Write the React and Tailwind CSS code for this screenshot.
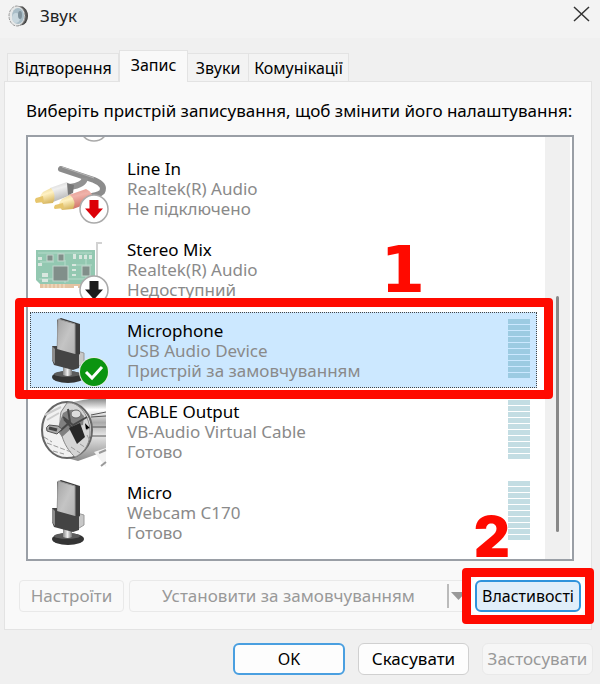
import React from 'react';

function SpeakerIcon() {
  return (
    <svg width="22" height="24" viewBox="0 0 22 24" aria-hidden="true">
      <ellipse cx="14" cy="12" rx="6" ry="9" fill="#444" />
      <path d="M9 2 15 2.500 19 8 19 15 15 21 8 22Z" fill="#555" />
      <ellipse cx="9" cy="12" rx="8" ry="10" fill="#e6e8e8" stroke="#999" strokeWidth="1" strokeDasharray="3 1" />
      <ellipse cx="10" cy="12" rx="6" ry="8" fill="#a9bdc7" />
      <ellipse cx="8" cy="14" rx="4" ry="5" fill="#c8d7de" />
      <ellipse cx="12" cy="11" rx="2" ry="4" fill="#7f919b" />
    </svg>
  );
}

function DownBadge({ color }) {
  return (
    <g>
      <circle cx="62" cy="60" r="14" fill="#fff" stroke="#aaa" strokeWidth="1.500" />
      <path d="M57.500 51h9v8.500h4.500l-9 10-9-10h4.500z" fill={color} />
    </g>
  );
}

function LineInIcon() {
  return (
    <svg width="80" height="80" viewBox="0 0 80 80" className="block" aria-hidden="true">
      <defs>
        <linearGradient id="gold" x1="0" y1="0" x2="0.300" y2="1">
          <stop offset="0" stopColor="#e8d08d" />
          <stop offset="0.450" stopColor="#fff2c4" />
          <stop offset="1" stopColor="#d9b965" />
        </linearGradient>
        <linearGradient id="silver" x1="0" y1="0" x2="0.300" y2="1">
          <stop offset="0" stopColor="#c8c8c8" />
          <stop offset="0.400" stopColor="#f0f0f0" />
          <stop offset="1" stopColor="#b5b5b5" />
        </linearGradient>
        <linearGradient id="redPlug" x1="0" y1="0" x2="0.300" y2="1">
          <stop offset="0" stopColor="#e0968c" />
          <stop offset="0.400" stopColor="#f0b3aa" />
          <stop offset="1" stopColor="#cf7166" />
        </linearGradient>
      </defs>
      <path d="M29 20 62 31Q74 36 70 43 66 47 55 47" fill="none" stroke="#8c8c8c" strokeWidth="6" strokeLinecap="round" />
      <path d="M53 29Q52 36 38 38" fill="none" stroke="#929292" strokeWidth="6" />
      <path d="M30 18 62 29" stroke="#b5b5b5" strokeWidth="1" />
      <path d="M18 39 35 33Q40 37 39 46L21 53Z" fill="url(#silver)" />
      <path d="m35 34 7 2-1 8-5 2Z" fill="#777" />
      <path d="M11 43 19 39Q25 46 21 54L11 55Q5 49 11 43Z" fill="url(#gold)" />
      <path d="M11 47 4 49q-2 2 0 5l8-1Z" fill="#e7c66d" />
      <path d="M37 46 54 40Q63 44 60 53L41 60Z" fill="url(#redPlug)" />
      <path d="M30 50 38 46Q45 52 41 60L30 61Q24 56 30 50Z" fill="url(#gold)" />
      <path d="M31 54 23 56q-2 3 0 4l9-1Z" fill="#e7c66d" />
      <DownBadge color="#dc0008" />
    </svg>
  );
}

function SoundCardIcon() {
  return (
    <svg width="80" height="80" viewBox="0 0 80 80" className="block" aria-hidden="true">
      <path d="M70 13H65V50" fill="none" stroke="#d2d2d2" strokeWidth="2" />
      <path d="M4 20H63V54H8L4 50Z" fill="#93c8b1" />
      <path d="M8 54h46v4H46v-2h-4v2H8Z" fill="#e3c3a2" />
      <path d="M12 54v4m4-4v4m4-4v4m4-4v4m4-4v4m4-4v4" stroke="#f5e3ca" />
      <path d="M6 23h54M8 32h14m18 3h20M7 49h50M28 28v-5M33 30v23M54 24v24" stroke="#b6dccb" strokeWidth="1" />
      <g fill="#818f8a" stroke="#c3d6cd" strokeWidth="1">
        <rect x="21" y="36" width="15" height="15" />
        <rect x="50" y="36" width="8" height="10" />
        <rect x="15" y="25" width="6" height="6" />
        <rect x="26" y="24" width="6" height="7" />
      </g>
      <g fill="#d9e7df">
        <rect x="6" y="27" width="4" height="3" />
        <rect x="6" y="33" width="4" height="3" />
        <rect x="10" y="43" width="6" height="4" />
        <rect x="10" y="49" width="6" height="3" />
        <rect x="41" y="24" width="3" height="5" />
        <rect x="47" y="25" width="3" height="4" />
        <rect x="52" y="25" width="3" height="4" />
        <rect x="57" y="25" width="3" height="4" />
        <rect x="40" y="34" width="4" height="2" />
        <rect x="40" y="39" width="4" height="2" />
        <rect x="40" y="44" width="4" height="2" />
      </g>
      <DownBadge color="#1c1c1c" />
    </svg>
  );
}

function MicIcon({ checked }) {
  const id = checked ? 'micDefault' : 'micPlain';
  return (
    <svg width="80" height="80" viewBox="0 0 80 80" className="block" aria-hidden="true">
      <defs>
        <linearGradient id={id} x1="0" y1="0" x2="1" y2="1">
          <stop offset="0" stopColor="#a5a5a5" />
          <stop offset="0.500" stopColor="#c4c4c4" />
          <stop offset="1" stopColor="#b0b0b0" />
        </linearGradient>
        <linearGradient id={id + 'Post'} x1="0" y1="0" x2="1" y2="0">
          <stop offset="0" stopColor="#888" />
          <stop offset="0.500" stopColor="#eee" />
          <stop offset="1" stopColor="#777" />
        </linearGradient>
      </defs>
      <ellipse cx="36" cy="66" rx="16" ry="6" fill="#343434" />
      <ellipse cx="35" cy="63" rx="13" ry="3" fill="#5c5c5c" />
      <path d="M31 53h9v11q-4 2-9 0Z" fill={'url(#' + id + 'Post)'} />
      <path d="M45 40 52 42V52L44 57Z" fill="#c8c8c8" stroke="#999" strokeWidth="1" />
      <path d="M29 7 48 13 48 43 42 47 26 41 25 9Z" fill="#3d3d3d" />
      <path d="M26 8 43 13V46L25 41Z" fill={'url(#' + id + ')'} stroke="#999" strokeWidth="1" />
      <path d="M20 35 25 35V38L43 43 47 43V57L41 59 22 54 20 49Z" fill="#444" />
      <path d="M20 35 23 38V53L20 49Z" fill="#8c8c8c" />
      {checked && (
        <g>
          <circle cx="62" cy="61" r="15" fill="#e6ebe3" />
          <circle cx="62" cy="61" r="14" fill="#0b9410" />
          <path d="m54 61 6 6 10-11" fill="none" stroke="#fff" strokeWidth="3" />
        </g>
      )}
    </svg>
  );
}

function CableIcon() {
  return (
    <svg width="80" height="80" viewBox="0 0 80 80" className="block" aria-hidden="true">
      <defs>
        <linearGradient id="barrel" x1="0" y1="0" x2="0" y2="1">
          <stop offset="0" stopColor="#777" />
          <stop offset="0.200" stopColor="#fff" />
          <stop offset="0.400" stopColor="#aaa" />
          <stop offset="0.600" stopColor="#e5e5e5" />
          <stop offset="1" stopColor="#8b8b8b" />
        </linearGradient>
      </defs>
      <path d="M34 12Q50 7 74 5V59L46 69 35 66Z" fill="url(#barrel)" />
      <path d="M59 23 74 20M60 35h14M60 44h14M59 25l15-1" stroke="#555" strokeWidth="1" />
      <path d="M62 60 74 56V75l-8-10Z" fill="#f2f2f2" />
      <path d="m67 61 7-3m-5 16 5-4" stroke="#999" strokeWidth="2" />
      <ellipse cx="35" cy="38" rx="25" ry="28" fill="#f1f1f1" stroke="#666" strokeWidth="2" />
      <path d="M35 11C47 9 59 25 58 42c-1 13-8 20-15 23-9-8-18-24-14-45Z" fill="#d5d5d5" stroke="#888" />
      <path d="M31 21Q42 13 52 24l-1 9-11 3-10 9-5-7Z" fill="#808080" />
      <path d="m31 25 10 8 14-8M36 17l2 13-10 9m4-12 16 18" fill="none" stroke="#484848" strokeWidth="2" />
      <path d="m37 36 11-5 5 14-8 7Z" fill="#282828" />
      <ellipse cx="44" cy="22" rx="5" ry="4" fill="#ddd" stroke="#666" />
      <path d="M17 33q-4 2-2 6l10 3 5-5-4-3Z" fill="#aaa" stroke="#555" />
      <path d="m17 36 8 2" stroke="#444" strokeWidth="3" />
      <path d="m53 31 5 5-4 2m1 5 3 6M48 52l6 4M15 51l24 9M21 59l11 3M39 55l9 6M12 45l8 5" stroke="#999" strokeWidth="1" strokeDasharray="5 2" />
      <path d="M13 23 29 15M15 28 27 21" stroke="#ccc" strokeWidth="2" />
    </svg>
  );
}

function Meter({ selected }) {
  return (
    <div className="flex shrink-0 flex-col gap-px" aria-hidden="true">
      {Array.from({ length: 10 }, (_, i) => (
        <span key={i} className={selected ? 'h-[5px] w-[22px] bg-[#9ccbe2]' : 'h-[5px] w-[22px] bg-[#c3dde3]'} />
      ))}
    </div>
  );
}

const devices = [
  { name: 'Line In', driver: 'Realtek(R) Audio', status: 'Не підключено', icon: <LineInIcon /> },
  { name: 'Stereo Mix', driver: 'Realtek(R) Audio', status: 'Недоступний', icon: <SoundCardIcon /> },
  { name: 'Microphone', driver: 'USB Audio Device', status: 'Пристрій за замовчуванням', icon: <MicIcon checked />, meter: true, selected: true },
  { name: 'CABLE Output', driver: 'VB-Audio Virtual Cable', status: 'Готово', icon: <CableIcon />, meter: true },
  { name: 'Micro', driver: 'Webcam C170', status: 'Готово', icon: <MicIcon />, meter: true },
];

function Device({ device }) {
  return (
    <li role="option" aria-selected={!!device.selected} className="relative h-[81px] pl-0.5 pr-2 pt-0.5">
      <div
        className={
          device.selected
            ? 'flex h-[76px] border border-dotted border-[#444] bg-[#cce8ff]'
            : 'flex h-[76px] border border-transparent'
        }
      >
        <div className="-mt-0.5 w-24 shrink-0 pl-px">{device.icon}</div>
        <div className="min-w-0 flex-1 pt-2 text-[17px] leading-5 text-[#8a8a8a]">
          <p className="text-black">{device.name}</p>
          <p>{device.driver}</p>
          <p>{device.status}</p>
        </div>
        {device.meter && <div className="pr-1.5 pt-1.5"><Meter selected={device.selected} /></div>}
      </div>
      {device.selected && (
        <>
          <div className="absolute -bottom-2 -left-[13px] -right-2 -top-3 z-10 rounded border-[9px] border-[#ff0a00]" />
          <span className="absolute -top-[76px] right-[120px] z-10 font-['DejaVu_Sans'] text-[64px] font-bold leading-[72px] text-[#ff0a00]">1</span>
        </>
      )}
    </li>
  );
}

export default function App() {
  return (
    <main className="flex min-h-screen flex-col bg-[#f0f0f0] font-['Noto_Sans','Open_Sans',sans-serif] text-black">
      <header className="flex h-[38px] items-start justify-between bg-[#f3f3f3] pl-2 pr-2">
        <div className="flex items-center gap-2.5 pt-0.5">
          <SpeakerIcon />
          <h1 className="text-[17px] leading-7 text-[#222]">Звук</h1>
        </div>
        <button type="button" aria-label="Закрити" className="pt-1.5">
          <svg width="20" height="18" viewBox="0 0 20 18" aria-hidden="true">
            <path d="m2 1 15 14M17 1 2 15" stroke="#333" strokeWidth="1.500" />
          </svg>
        </button>
      </header>

      <div className="mt-3 flex items-end pl-[7px] text-base leading-6" role="tablist">
        <button role="tab" aria-selected="false" type="button" className="h-7 w-28 border border-b-0 border-[#e3e3e3] bg-[#f3f3f3] whitespace-nowrap">Відтворення</button>
        <button role="tab" aria-selected="true" type="button" className="z-10 -mb-px h-8 w-[69px] border border-b-0 border-[#e3e3e3] bg-[#f9f9f9] pb-1">Запис</button>
        <button role="tab" aria-selected="false" type="button" className="h-7 w-[61px] border border-b-0 border-l-0 border-[#e3e3e3] bg-[#f3f3f3]">Звуки</button>
        <button role="tab" aria-selected="false" type="button" className="h-7 w-[100px] border border-b-0 border-l-0 border-[#e3e3e3] bg-[#f3f3f3] whitespace-nowrap">Комунікації</button>
      </div>

      <section className="ml-1 mr-2 flex flex-col border border-[#e3e3e3] bg-[#f9f9f9] pb-[17px]" role="tabpanel">
        <p className="pl-[21px] pt-[17px] text-[17px] leading-6 whitespace-nowrap">Виберіть пристрій записування, щоб змінити його налаштування:</p>
        <div className="relative ml-[21px] mr-[17px] mt-3 flex border-2 border-[#9a9fa6] bg-white">
          <ul role="listbox" aria-label="Пристрої записування" className="min-w-0 flex-1 pb-1.5">
            <li className="h-[11px] overflow-hidden" aria-hidden="true">
              <svg width="80" height="12" viewBox="0 0 80 12">
                <circle cx="66" cy="-10" r="14" fill="none" stroke="#aaa" strokeWidth="1.500" />
              </svg>
            </li>
            {devices.map((d) => <Device key={d.name} device={d} />)}
          </ul>
          <div className="mr-0.5 flex w-[25px] justify-center bg-[#f0f0f0] pb-[27px] pt-[159px]">
            <div className="w-[3px] rounded bg-[#888]" />
          </div>
          <span className="absolute -bottom-2.5 right-[62px] z-10 font-['Inter'] text-[56px] font-black leading-[64px] text-[#ff0a00]">2</span>
        </div>
        <div className="ml-3.5 mr-2.5 mt-[19px] flex h-8 text-[17px]">
          <button type="button" disabled className="mr-[5px] w-[105px] rounded border border-[#e9e9e9] text-[#999]">Настроїти</button>
          <button type="button" disabled className="flex flex-1 items-center rounded border border-[#e9e9e9] text-[#999] whitespace-nowrap">
            <span className="flex-1">Установити за замовчуванням</span>
            <span className="h-6 w-0.5 bg-[#bbb]" />
            <svg className="ml-0.5" width="15" height="8" viewBox="0 0 15 8" aria-hidden="true"><path d="M0 0h15L7.500 8Z" fill="#999" /></svg>
          </button>
          <div className="relative ml-2">
            <button type="button" className="h-8 w-[106px] rounded-md border-2 border-[#2f93dc] bg-[#e0eefa] text-base text-black ring-4 ring-white">Властивості</button>
            <div className="pointer-events-none absolute -inset-x-[13px] -bottom-3 -top-3 z-10 rounded border-[9px] border-[#ff0a00]" />
          </div>
        </div>
      </section>

      <footer className="mr-[7px] mt-[13px] flex h-8 justify-end gap-[13px] text-[17px]">
        <button type="button" className="w-28 rounded-md border-2 border-[#4a9fe0] bg-[#fdfdfd] text-base">OK</button>
        <button type="button" className="w-[111px] rounded-md border border-[#d0d0d0] bg-[#fdfdfd]">Скасувати</button>
        <button type="button" disabled className="w-[111px] rounded-md border border-[#e9e9e9] bg-[#f6f6f6] text-[#999]">Застосувати</button>
      </footer>
    </main>
  );
}
